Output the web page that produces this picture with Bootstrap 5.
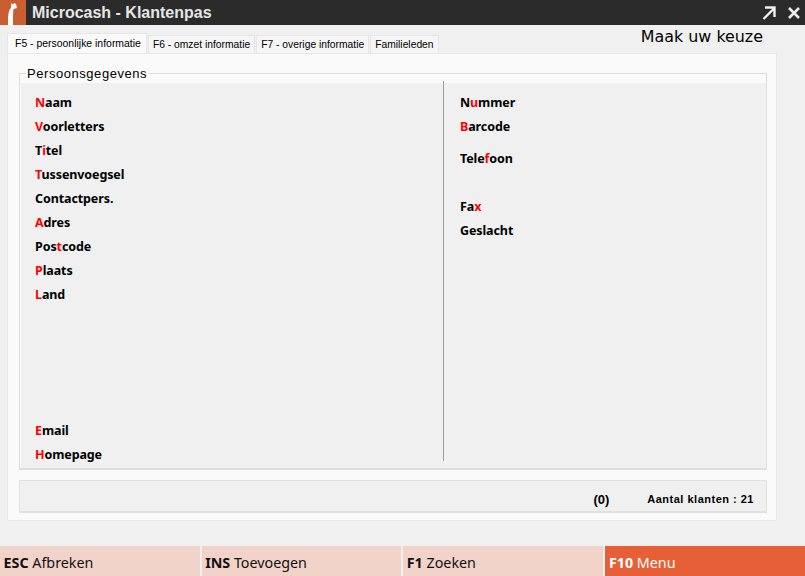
<!DOCTYPE html>
<html lang="nl">
<head>
<meta charset="utf-8">
<title>Microcash - Klantenpas</title>
<link href="https://cdn.jsdelivr.net/npm/bootstrap@5.3.0/dist/css/bootstrap.min.css" rel="stylesheet">
<style>
html,body{height:100%;overflow:hidden}
body{background:#f0f0f0;font-family:"Noto Sans","Open Sans",sans-serif;color:#000}
.app-shell{width:805px;height:576px}
.title-bar{height:25px;background:#2b2b2b;color:#e6e6e6;font:bold 16px/25px "Liberation Sans",sans-serif}
.logo-box{width:26px;height:25px;background:#c95f30}
.app-title{margin-left:6px}
.win-btns{gap:12px;padding-right:5px}
.tab-row{height:28px;padding:0 42px 0 7px}
.tab-row .nav-tabs{border-bottom:0;gap:1px;align-items:flex-end;height:28px}
.tab-row .nav-link{font:10.300px/17px "Liberation Sans",sans-serif;color:#000;height:18px;padding:0 4px;background:#f5f5f5;border:1px solid #e6e6e6;border-bottom:0;border-radius:0;margin:0;white-space:nowrap}
.tab-row .nav-link.active{font-size:10.450px;height:20px;line-height:19px;padding:0 5px 0 7px;background:#fafafa;color:#000;border-color:#e6e6e6}
.pick-text{font:15.900px/18px "DejaVu Sans",sans-serif;padding-bottom:7px;margin-top:-2px}
.main-panel{margin:0 28px 0 7px;height:468px;background:#fafafa;border:1px solid #e8e8e8;padding:10px 9px 7px 11px}
.person-set{border:1px solid #dedede;border-bottom-width:2px;height:406px;margin:0;padding:0;min-width:0;background:#fafafa}
.person-set legend{float:none;width:auto;margin:-9px 0 1px 6px;padding:0 1px;font:13px/20px "Liberation Sans",sans-serif;letter-spacing:.55px;background:#fafafa;display:block;height:18px}
.person-body{background:#f0f0f0;margin:0 0 0 1px;height:385px;display:flex}
.col-left{width:422px;padding:8px 0 1px 14px}
.col-right{flex:1;padding:8px 0 0 16px}
.col-sep{width:1px;background:#a0a0a0;height:380px;margin-top:-2px;flex:none}
.field-label{font-weight:700;font-size:12.500px;line-height:24px;height:24px;letter-spacing:-.1px;color:#000}
.field-label b{color:#f00;font-weight:700}
.mt-gap-1{margin-top:8px}
.mt-gap-2{margin-top:24px}
.status-box{height:33px;margin-top:10px;background:#f0f0f0;border:1px solid #e0e0e0;border-bottom-width:2px;font:bold 11.500px/17px "Liberation Sans",sans-serif;padding:10px 12px 0 0}
.count-zero{font-size:13px;margin-right:38px}
.count-total{letter-spacing:.5px;font-size:11px}
.foot-bar{height:30px;margin-top:25px;gap:2px}
.foot-key{flex:1;background:#f2d3c9;font-size:14.300px;line-height:34px;padding-left:3.500px;color:#111;overflow:hidden}
.foot-key.is-active{background:#e65f36;color:#fff;padding-left:4px}
.foot-key strong{font-weight:700}
</style>
</head>
<body>
<div class="app-shell d-flex flex-column">
  <div class="title-bar d-flex align-items-center">
    <div class="logo-box flex-shrink-0">
      <svg class="d-block" width="26" height="25" viewBox="0 0 26 25"><path d="M8 25 C8 15 8.500 10 11 8 L11 3 L12.500 4.500 L14.500 3 L16 4 L17 8 L13.500 9 C13 12 13 18 13 25 Z" fill="#fff"/></svg>
    </div>
    <span class="app-title">Microcash - Klantenpas</span>
    <div class="ms-auto d-flex align-items-center win-btns">
      <svg width="14" height="14" viewBox="0 0 14 14"><path d="M1.500 13 L12 2.500 M3 1.500 H12.500 V11" fill="none" stroke="#f0f0f0" stroke-width="2.400"/></svg>
      <svg width="12" height="12" viewBox="0 0 12 12"><path d="M1 1 L11 11 M11 1 L1 11" stroke="#ececec" stroke-width="2.600"/></svg>
    </div>
  </div>

  <div class="tab-row d-flex">
    <ul class="nav nav-tabs">
      <li class="nav-item"><a class="nav-link active" href="#">F5 - persoonlijke informatie</a></li>
      <li class="nav-item"><a class="nav-link" href="#">F6 - omzet informatie</a></li>
      <li class="nav-item"><a class="nav-link" href="#">F7 - overige informatie</a></li>
      <li class="nav-item"><a class="nav-link" href="#">Familieleden</a></li>
    </ul>
    <div class="ms-auto align-self-end pick-text">Maak uw keuze</div>
  </div>

  <div class="main-panel">
    <fieldset class="person-set">
      <legend>Persoonsgegevens</legend>
      <div class="person-body">
        <div class="col-left d-flex flex-column">
          <div class="field-label"><b>N</b>aam</div>
          <div class="field-label"><b>V</b>oorletters</div>
          <div class="field-label">T<b>i</b>tel</div>
          <div class="field-label"><b>T</b>ussenvoegsel</div>
          <div class="field-label">Contactpers.</div>
          <div class="field-label"><b>A</b>dres</div>
          <div class="field-label">Pos<b>t</b>code</div>
          <div class="field-label"><b>P</b>laats</div>
          <div class="field-label"><b>L</b>and</div>
          <div class="field-label mt-auto"><b>E</b>mail</div>
          <div class="field-label"><b>H</b>omepage</div>
        </div>
        <div class="col-sep"></div>
        <div class="col-right">
          <div class="field-label">N<b>u</b>mmer</div>
          <div class="field-label"><b>B</b>arcode</div>
          <div class="field-label mt-gap-1">Tele<b>f</b>oon</div>
          <div class="field-label mt-gap-2">Fa<b>x</b></div>
          <div class="field-label">Geslacht</div>
        </div>
      </div>
    </fieldset>
    <div class="status-box d-flex justify-content-end">
      <span class="count-zero">(0)</span>
      <span class="count-total">Aantal klanten : 21</span>
    </div>
  </div>

  <div class="foot-bar d-flex">
    <div class="foot-key"><strong>ESC</strong> Afbreken</div>
    <div class="foot-key"><strong>INS</strong> Toevoegen</div>
    <div class="foot-key"><strong>F1</strong> Zoeken</div>
    <div class="foot-key is-active"><strong>F10</strong> Menu</div>
  </div>
</div>
<script src="https://cdn.jsdelivr.net/npm/bootstrap@5.3.0/dist/js/bootstrap.bundle.min.js"></script>
</body>
</html>
